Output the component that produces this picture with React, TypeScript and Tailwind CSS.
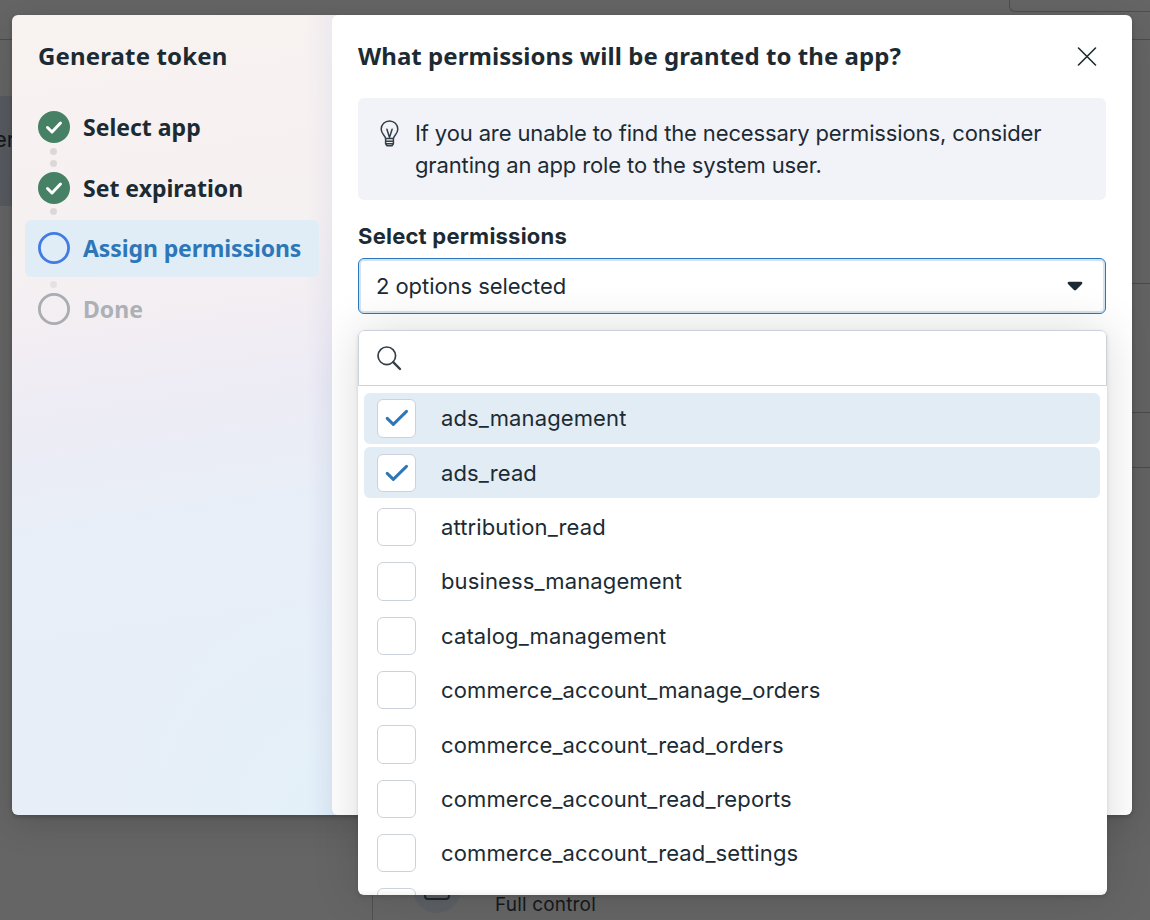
import React from 'react';

type StepStatus = 'done' | 'active' | 'upcoming';

interface Step {
  label: string;
  status: StepStatus;
}

const STEPS: Step[] = [
  { label: 'Select app', status: 'done' },
  { label: 'Set expiration', status: 'done' },
  { label: 'Assign permissions', status: 'active' },
  { label: 'Done', status: 'upcoming' },
];

const PERMISSIONS = [
  { name: 'ads_management', checked: true },
  { name: 'ads_read', checked: true },
  { name: 'attribution_read', checked: false },
  { name: 'business_management', checked: false },
  { name: 'catalog_management', checked: false },
  { name: 'commerce_account_manage_orders', checked: false },
  { name: 'commerce_account_read_orders', checked: false },
  { name: 'commerce_account_read_reports', checked: false },
  { name: 'commerce_account_read_settings', checked: false },
  { name: '', checked: false },
];

const StepIcon: React.FC<{ status: StepStatus }> = ({ status }) => {
  if (status === 'done') {
    return (
      <svg width="32" height="32" viewBox="0 0 32 32" fill="none">
        <circle cx="16" cy="16" r="16" fill="#478165" />
        <path
          d="M9.500 16.500l4.500 4.500 8.500-9"
          stroke="#fff"
          strokeWidth="3"
          strokeLinecap="round"
          strokeLinejoin="round"
        />
      </svg>
    );
  }
  return (
    <svg width="32" height="32" viewBox="0 0 32 32" fill="none">
      <circle
        cx="16"
        cy="16"
        r="14.6"
        stroke={status === 'active' ? '#427be3' : '#a9acb0'}
        strokeWidth="2.8"
      />
    </svg>
  );
};

const Dot: React.FC<{ faded?: boolean }> = ({ faded }) => (
  <span
    className={`block size-[7px] shrink-0 rounded-full ${faded ? 'bg-[#e6e0e5]' : 'bg-[#ddd7d8]'}`}
  />
);

// Dots lean towards the neighbour that is not highlighted
const CONNECTOR_SHIFT = ['', '', '-translate-y-[7px]', 'translate-y-[6px]'];

const Stepper: React.FC = () => (
  <aside className="w-[326px] shrink-0 rounded-l-md bg-[linear-gradient(to_left,rgba(70,90,180,0.07),transparent_32px),radial-gradient(circle_at_100%_100%,#e4f1f8_0%,#e4f1f800_220px),linear-gradient(172deg,#f8f2f1_0%,#f6f1f1_28%,#f1edf3_41%,#edecf5_49%,#e8eff8_63%,#e7eef8_100%)] pt-[25px] pr-[19px] pl-[13px]">
    <h2 className="pl-[13px] font-['Noto_Sans'] text-[24px] leading-[32px] font-bold tracking-[0.14px] text-[#1c2b33]">
      Generate token
    </h2>
    <ol className="mt-[27px]">
      {STEPS.map((step, i) => (
        <li key={step.label}>
          {i > 0 && (
            <div
              className={`ml-[25px] flex h-[4px] w-[7px] flex-col items-center justify-center gap-[5px] ${CONNECTOR_SHIFT[i]}`}
            >
              <Dot faded={i === 3} />
              {i === 1 && <Dot />}
            </div>
          )}
          <div
            className={`flex h-[56.5px] items-center gap-[13px] rounded-md pl-[13px] ${step.status === 'active' ? 'bg-[#e1edf6]' : ''}`}
          >
            <StepIcon status={step.status} />
            <span
              className={`font-['Noto_Sans'] text-[23px] leading-[32px] font-bold whitespace-nowrap ${step.status === 'active' ? 'tracking-[-0.1px] text-[#2d77b9]' : step.status === 'upcoming' ? 'text-[#adb0b5]' : 'text-[#1c2b33]'}`}
            >
              {step.label}
            </span>
          </div>
        </li>
      ))}
    </ol>
  </aside>
);

const PermissionRow: React.FC<{ name: string; checked: boolean }> = ({
  name,
  checked,
}) => (
  <li
    className={`flex h-[51px] shrink-0 items-center rounded-md pl-[13px] ${checked ? 'bg-[#e2ecf5]' : ''}`}
  >
    <span className="flex h-[38.4px] w-[39px] items-center justify-center rounded-md border border-[#ccd1dc] bg-white">
      {checked && (
        <svg width="24" height="24" viewBox="0 0 24 24" fill="none">
          <path
            d="M2.200 12.400l6.100 6L21.500 5.400"
            stroke="#2d77b9"
            strokeWidth="3"
            strokeLinecap="round"
            strokeLinejoin="round"
          />
        </svg>
      )}
    </span>
    <span className="ml-[25px] text-[22px] leading-[32px] tracking-[0.12px]">
      {name}
    </span>
  </li>
);

const PermissionMenu: React.FC = () => (
  <div className="absolute top-[72px] left-0 z-10 flex h-[565px] w-[749px] flex-col overflow-hidden rounded-md bg-white shadow-[0_2px_4px_rgba(0,0,0,0.12),0_0_48px_rgba(0,0,0,0.14)]">
    <div className="flex h-14 shrink-0 items-center rounded-t-md border border-[#ccd1dc] pl-[17px]">
      <svg width="27" height="27" viewBox="0 0 27 27" fill="none" stroke="#344049">
        <circle cx="10.8" cy="10.8" r="8.8" strokeWidth="1.7" />
        <path d="M17.200 17.200l6.800 6.800" strokeWidth="2.4" strokeLinecap="round" />
      </svg>
    </div>
    <ul className="flex w-[748px] flex-col gap-[3.35px] px-1.5 pt-[6.94px]">
      {PERMISSIONS.map((p) => (
        <PermissionRow key={p.name} name={p.name} checked={p.checked} />
      ))}
    </ul>
    <div className="absolute inset-x-0 bottom-0 h-1.5 bg-linear-to-b from-transparent to-black/5" />
  </div>
);

// Page behind the dialog, already dimmed
const PageBackdrop: React.FC = () => (
  <div className="absolute inset-0 flex flex-col bg-[#656565] text-[#15191c]">
    <div className="flex h-10 shrink-0 items-start justify-end border-b border-[#4c4c4f]">
      <div className="h-3 w-[141px] rounded-bl-md border-b border-l border-[#4c4d55]" />
    </div>
    <div className="flex flex-1">
      <div className="w-[373px] border-r border-[#505050] pt-14">
        <div className="flex h-[110px] items-center bg-[#575b61] pb-[24px]">
          <span className="-ml-[6px] text-[22px] leading-[32px]">er</span>
        </div>
      </div>
      <div className="flex flex-1 flex-col">
        <div className="h-[244px] border-b border-[#4c4d50]" />
        <div className="h-[129px] border-b border-[#4c4d50]" />
        <div className="h-[55px] border-b border-[#4c4d50]" />
        <div className="mt-auto flex h-[55px] items-start pl-[40px]">
          <div className="flex size-12 items-center justify-center rounded-full bg-[#5c6065]">
            <div className="h-[22px] w-[26px] rounded-[4px] border-2 border-[#22262a]" />
          </div>
          <span className="mt-[25px] ml-[34px] text-[19px] leading-[30px] tracking-[0.17px]">
            Full control
          </span>
        </div>
      </div>
    </div>
  </div>
);

export default function App() {
  return (
    <div className="relative h-[920px] w-[1150px] overflow-hidden font-[Inter,sans-serif] text-[#1c2b33]">
      <PageBackdrop />
      <div className="relative pt-[15px] pl-3">
        <div className="flex h-[800px] w-[1120px] rounded-md shadow-[0_2px_4px_rgba(0,0,0,0.2),0_8px_36px_rgba(0,0,0,0.15)]">
          <Stepper />
          {/* overlaps the sidebar so its gradient shows behind the rounded corners */}
          <main className="relative -ml-1.5 flex-1 rounded-md bg-white px-[26px] pt-[25px]">
            <div className="flex h-8 items-center justify-between">
              <h1 className="font-['Noto_Sans'] text-[24px] leading-[32px] font-bold tracking-[0.05px] whitespace-nowrap">
                What permissions will be granted to the app?
              </h1>
              <svg className="mr-[9px]" width="20" height="20" viewBox="0 0 20 20" fill="none">
                <path
                  d="M1.500 2l17 17M18.500 2l-17 17"
                  stroke="#1c2b33"
                  strokeWidth="1.6"
                  strokeLinecap="round"
                />
              </svg>
            </div>
            <div className="mt-[26px] flex h-[102px] rounded-md bg-[#f2f3f8] pt-[19px] pl-[22px]">
              <svg
                className="mt-[2.5px] shrink-0"
                width="19"
                height="27"
                viewBox="0 0 19 27"
                fill="none"
                stroke="#344049"
                strokeWidth="1.5"
                strokeLinecap="round"
                strokeLinejoin="round"
              >
                <path d="M5.600 18.600c0-2.800-4.400-4.600-4.400-9.400a8.300 8.300 0 0 1 16.600 0c0 4.800-4.400 6.600-4.400 9.400z" />
                <path d="M6.900 9.300L9.500 17.500l2.600-8.200M5.600 18.600v5.200l1.400 2h5l1.400-2v-5.200M5.600 21.200h7.800M5.600 23.800h7.800" />
              </svg>
              <p className="ml-[16px] text-[22px] leading-[32px] tracking-[-0.13px] whitespace-nowrap">
                If you are unable to find the necessary permissions, consider
                <br />
                granting an app role to the system user.
              </p>
            </div>
            <label className="mt-5 block text-[22px] leading-[32px] font-bold tracking-[0.22px]">
              Select permissions
            </label>
            <div className="relative mt-1.5">
              <div className="flex h-14 items-center justify-between rounded-md border border-[#2d77b9] bg-white pr-[22px] pl-[17px] shadow-[inset_0_0_0_2px_#d3e3f0]">
                <span className="text-[22px] leading-[32px] tracking-[-0.06px]">
                  2 options selected
                </span>
                <svg width="16" height="10" viewBox="0 0 16 10" fill="#1c2b33">
                  <path d="M2 .8h12a1.300 1.300 0 0 1 1 2.200L9 9a1.500 1.500 0 0 1-2 0L1 3A1.300 1.300 0 0 1 2 .8z" />
                </svg>
              </div>
              <PermissionMenu />
            </div>
          </main>
        </div>
      </div>
    </div>
  );
}
